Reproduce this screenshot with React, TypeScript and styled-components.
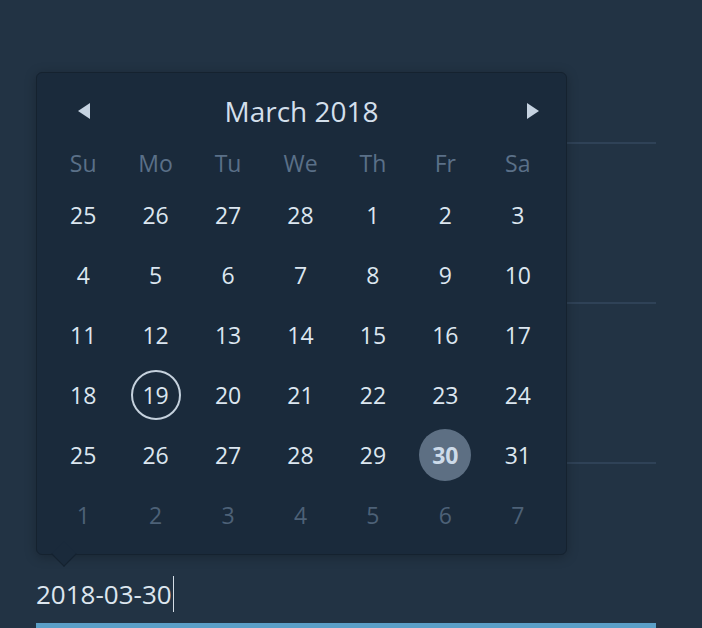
import React from "react";
import styled, { createGlobalStyle } from "styled-components";

const GlobalStyle = createGlobalStyle`
  html, body {
    margin: 0;
    padding: 0;
    background: #223344;
    font-family: "Open Sans", "Noto Sans", sans-serif;
  }
  * { box-sizing: border-box; }
`;

const Page = styled.div`
  position: relative;
  width: 702px;
  height: 628px;
  overflow: hidden;
  background: #223344;
`;

const Form = styled.div`
  display: flex;
  flex-direction: column;
  padding-left: 36px;
  width: 656px;
`;

const Field = styled.div<{ $h: number; $focused?: boolean }>`
  height: ${(p) => p.$h}px;
  display: flex;
  align-items: flex-end;
  padding-bottom: 11px;
  border-bottom: ${(p) => (p.$focused ? "5px solid #5b9fc7" : "2px solid #2f4257")};
`;

const InputText = styled.div`
  display: flex;
  align-items: center;
  height: 36px;
  font-size: 26px;
  line-height: 36px;
  color: #dde6ef;
`;

const Caret = styled.span`
  width: 1.5px;
  height: 36px;
  background: #d4dde6;
  margin-left: 1px;
`;

const Popover = styled.div`
  position: absolute;
  left: 36px;
  top: 72px;
  width: 531px;
  padding: 12px 12px 9px 10px;
  background: #1a2a3b;
  border: 1px solid #15222f;
  border-radius: 6px;
  box-shadow: 0 2px 12px rgba(0, 0, 0, 0.25);
`;

const Pointer = styled.div`
  position: absolute;
  left: 18px;
  bottom: -9px;
  width: 18px;
  height: 18px;
  background: #1a2a3b;
  border-right: 1px solid #15222f;
  border-bottom: 1px solid #15222f;
  transform: rotate(45deg);
`;

const Header = styled.div`
  display: grid;
  grid-template-columns: 1fr auto 1fr;
  align-items: center;
  height: 52px;
  margin: 0 -12px 0 -10px;
`;

const NavButton = styled.button<{ $side: "left" | "right" }>`
  justify-self: ${(p) => (p.$side === "left" ? "start" : "end")};
  margin: ${(p) => (p.$side === "left" ? "0 0 0 40px" : "0 26px 0 0")};
  width: 14px;
  height: 18px;
  padding: 0;
  border: 0;
  background: none;
  display: flex;
  align-items: center;
  justify-content: center;
  cursor: pointer;
`;

const Title = styled.div`
  font-size: 28px;
  line-height: 52px;
  color: #d3dfeb;
`;

const Grid = styled.div<{ $row: number }>`
  display: grid;
  grid-template-columns: repeat(7, 1fr);
  grid-auto-rows: ${(p) => p.$row}px;
`;

const WeekDay = styled.div`
  display: flex;
  align-items: center;
  justify-content: center;
  padding-top: 3px;
  font-size: 23px;
  color: #5a7088;
`;

const Cell = styled.div`
  display: flex;
  align-items: center;
  justify-content: center;
`;

const Day = styled.span<{ $muted?: boolean; $today?: boolean; $selected?: boolean }>`
  width: ${(p) => (p.$selected ? 52 : 50)}px;
  height: ${(p) => (p.$selected ? 52 : 50)}px;
  border-radius: 50%;
  display: flex;
  align-items: center;
  justify-content: center;
  font-size: 23px;
  font-weight: ${(p) => (p.$selected ? 700 : 400)};
  color: ${(p) => (p.$muted ? "#4d6177" : p.$selected ? "#cddbea" : "#dce6f0")};
  background: ${(p) => (p.$selected ? "#5d6f83" : "transparent")};
  border: ${(p) => (p.$today ? "2px solid #c5d1dd" : "none")};
`;

const weekDays = ["Su", "Mo", "Tu", "We", "Th", "Fr", "Sa"];

type DayItem = { n: number; muted?: boolean };

const days: DayItem[] = [
  ...[25, 26, 27, 28].map((n) => ({ n, muted: false })),
  ...Array.from({ length: 31 }, (_, i) => ({ n: i + 1 })),
  ...[1, 2, 3, 4, 5, 6, 7].map((n) => ({ n, muted: true })),
];

function Arrow({ dir }: { dir: "left" | "right" }) {
  return (
    <svg width="12" height="16" viewBox="0 0 12 16">
      {dir === "left" ? (
        <polygon points="12,0 12,16 0,8" fill="#c6d3e1" />
      ) : (
        <polygon points="0,0 0,16 12,8" fill="#c6d3e1" />
      )}
    </svg>
  );
}

export default function App() {
  return (
    <>
      <GlobalStyle />
      <Page>
        <Form>
          <Field $h={144} />
          <Field $h={160} />
          <Field $h={160} />
          <Field $h={164} $focused>
            <InputText>
              2018-03-30
              <Caret />
            </InputText>
          </Field>
        </Form>

        <Popover>
          <Header>
            <NavButton $side="left" aria-label="Previous month">
              <Arrow dir="left" />
            </NavButton>
            <Title>March 2018</Title>
            <NavButton $side="right" aria-label="Next month">
              <Arrow dir="right" />
            </NavButton>
          </Header>
          <Grid $row={48}>
            {weekDays.map((d) => (
              <WeekDay key={d}>{d}</WeekDay>
            ))}
          </Grid>
          <Grid $row={60}>
            {days.map((d, i) => (
              <Cell key={i}>
                <Day
                  $muted={d.muted}
                  $today={!d.muted && i === 22}
                  $selected={!d.muted && i === 33}
                >
                  {d.n}
                </Day>
              </Cell>
            ))}
          </Grid>
          <Pointer />
        </Popover>
      </Page>
    </>
  );
}
